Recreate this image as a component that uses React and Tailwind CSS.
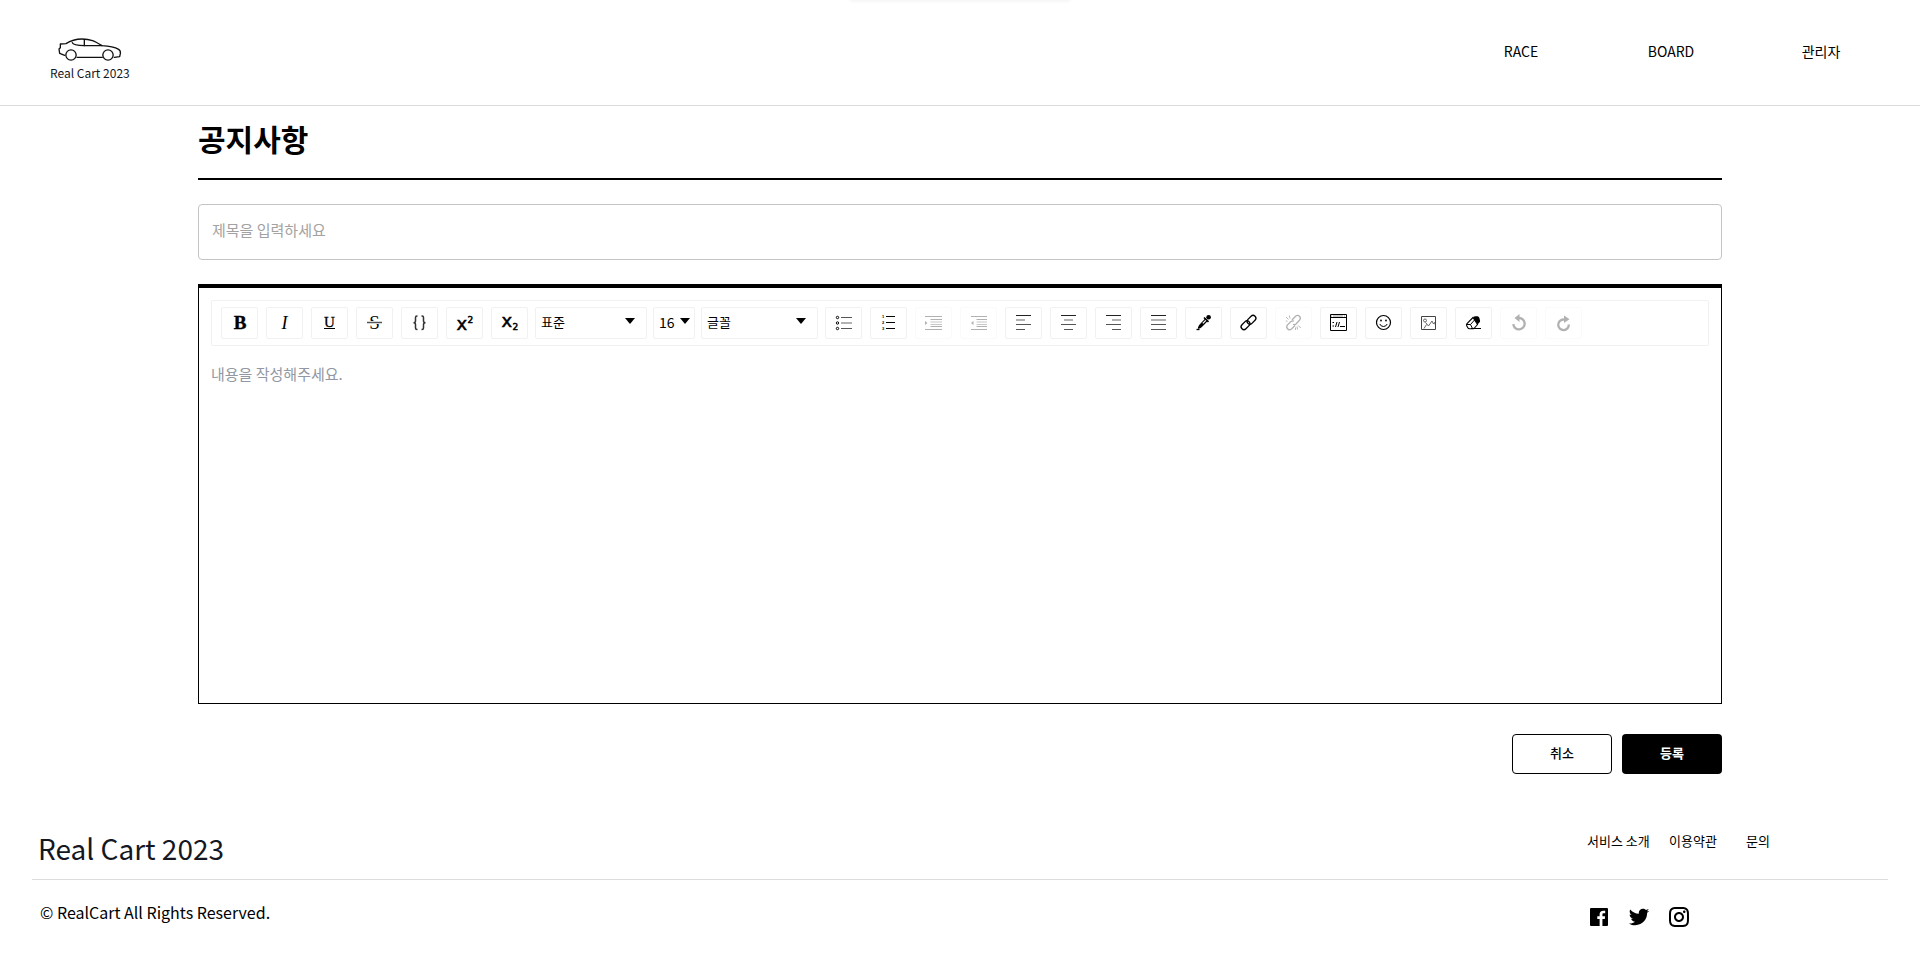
import { useState } from 'react'
import { BiLogoFacebookSquare } from 'react-icons/bi'
import { RiTwitterFill, RiInstagramLine } from 'react-icons/ri'

const NAV_LINKS = ['RACE', 'BOARD', '관리자']

function CarLogo() {
  return (
    <svg
      className="w-16 h-6"
      viewBox="0 0 192 72"
      fill="none"
      stroke="#111"
      strokeWidth="4"
      strokeLinecap="round"
      strokeLinejoin="round"
    >
      <path d="M20 55l-15-6-2-13 4-4V21l17-1c12-8 28-14 48-14 26 0 38 6 60 20 22 1 38 4 50 11 5 3 6 7 5 13l-2 9-16 2" />
      <path d="M57 61h76" />
      <path d="M43 17c2 6 12 8 36 9l53 0" />
      <path d="M79 7v19" />
      <circle cx="39" cy="54" r="15.5" />
      <circle cx="150" cy="54" r="15.5" />
    </svg>
  )
}

function Header() {
  return (
    <header className="flex items-center justify-between border-b border-[#dcdcdc] h-[106px] pl-[50px] pr-6">
      <a href="#" className="flex flex-col items-center pt-3">
        <CarLogo />
        <span className="mt-1 text-xs text-[#14171f] leading-4">Real Cart 2023</span>
      </a>
      <nav className="flex pb-1">
        {NAV_LINKS.map((label) => (
          <a key={label} href="#" className="w-[150px] text-center text-sm leading-5">
            {label}
          </a>
        ))}
      </nav>
    </header>
  )
}

// Every glyph fills the 25x20 content box of its button
const ICONS = {
  bold: (
    <text x="13" y="16" fontSize="19" fontWeight="700" textAnchor="middle" stroke="currentColor" strokeWidth="0.4">B</text>
  ),
  italic: (
    <text x="12.5" y="16" fontSize="18" fontStyle="italic" textAnchor="middle">I</text>
  ),
  underline: (
    <>
      <text x="12.5" y="14" fontSize="15" textAnchor="middle" stroke="currentColor" strokeWidth="0.3">U</text>
      <path d="M7 15.5h11" stroke="currentColor" />
    </>
  ),
  strike: (
    <>
      <text x="12.5" y="16" fontSize="19" textAnchor="middle">S</text>
      <path d="M5 9.5h15" stroke="#fff" strokeWidth="3" />
      <path d="M5 9.500h15" stroke="#555" strokeWidth="1.500" />
    </>
  ),
  code: (
    <g fill="none" stroke="#333" strokeWidth="1.500">
      <path d="M10.500 3H10Q8.500 3 8.500 4.500V8Q8.500 9.700 6.500 9.700Q8.500 9.700 8.500 11.400V15Q8.500 16.500 10 16.500h.5" />
      <path d="M14.500 3h.5Q16.500 3 16.500 4.500V8Q16.500 9.700 18.500 9.700Q16.500 9.700 16.500 11.400V15Q16.500 16.500 15 16.500h-.5" />
    </g>
  ),
  superscript: (
    <g fontFamily="DejaVu Sans" stroke="currentColor" strokeWidth="0.5">
      <text x="4.5" y="17" fontSize="18">x</text>
      <text x="15.5" y="10" fontSize="9">2</text>
    </g>
  ),
  subscript: (
    <g fontFamily="DejaVu Sans" stroke="currentColor" strokeWidth="0.5">
      <text x="4.5" y="14" fontSize="18">x</text>
      <text x="15.5" y="17" fontSize="9">2</text>
    </g>
  ),
  unordered: (
    <>
      <g fill="none" stroke="currentColor" strokeWidth="1">
        <circle cx="6.5" cy="4.5" r="1.2" />
        <circle cx="6.5" cy="10" r="1.2" />
        <circle cx="6.5" cy="15.5" r="1.2" />
      </g>
      <path d="M10 4.5h11M10 15.5h11" stroke="#555" />
      <path d="M10 10h11" stroke="#999" strokeWidth="1.5" />
    </>
  ),
  ordered: (
    <>
      <path d="M10 3.5h9M10 9.5h9M10 15.5h9" stroke="currentColor" strokeWidth="1.2" />
      <g fontFamily="Liberation Sans" fontSize="4" fontWeight="700">
        <text x="6" y="5">1</text>
        <text x="6" y="11">2</text>
        <text x="6" y="17">3</text>
      </g>
    </>
  ),
  indent: (
    <>
      <path d="M4 3.5h17M4 16.5h17M9.5 6.5h11.5M9.5 13.5h11.5" stroke="currentColor" />
      <path d="M9.5 9h11.5M9.5 11.5h11.5" stroke="currentColor" strokeOpacity="0.7" />
      <path d="M4 8l2.5 2L4 12z" />
    </>
  ),
  outdent: (
    <>
      <path d="M5 3.5h16M5 16.5h16M10.5 6.5h10.5M10.5 13.5h10.5" stroke="currentColor" />
      <path d="M10.5 9h10.5M10.5 11.5h10.5" stroke="currentColor" strokeOpacity="0.7" />
      <path d="M7.5 8L5 10l2.5 2z" />
    </>
  ),
  left: (
    <>
      <path d="M5 2.5h15" stroke="#222" />
      <path d="M5 7h9" stroke="#999" strokeWidth="1.5" />
      <path d="M5 11.5h15M5 16.5h9" stroke="#555" />
    </>
  ),
  center: (
    <>
      <path d="M5 2.5h15" stroke="#222" />
      <path d="M8 7h9" stroke="#999" strokeWidth="1.5" />
      <path d="M5 11.5h15M8 16.5h9" stroke="#555" />
    </>
  ),
  right: (
    <>
      <path d="M5 2.5h15" stroke="#222" />
      <path d="M11 7h9" stroke="#999" strokeWidth="1.5" />
      <path d="M5 11.5h15M11 16.5h9" stroke="#555" />
    </>
  ),
  justify: (
    <>
      <path d="M5 2.5h15" stroke="#222" />
      <path d="M5 7h15" stroke="#999" strokeWidth="1.5" />
      <path d="M5 11.5h15M5 16.5h15" stroke="#555" />
    </>
  ),
  color: (
    <>
      <circle cx="17.600" cy="4.200" r="2.300" />
      <path d="M13 4.500l4.500 4.300" stroke="currentColor" strokeWidth="1.600" />
      <path d="M14 6.500l1.800 1.700-5.300 5.300q-1.500 1.300-3 1.600.2-1.700 1.500-3.200z" stroke="currentColor" strokeWidth="1.100" />
      <path d="M14.800 7.300L11.800 10.300" stroke="#fff" strokeWidth="1.200" />
      <path d="M5.500 16.500h3" stroke="currentColor" strokeWidth="1.300" />
    </>
  ),
  link: (
    <g fill="none" stroke="currentColor" strokeWidth="1.300">
      <rect x="10.500" y="4" width="10" height="5.600" rx="2.800" transform="rotate(-45 15.500 6.800)" />
      <rect x="4.500" y="9.400" width="10" height="5.600" rx="2.800" transform="rotate(-45 9.500 12.200)" />
    </g>
  ),
  unlink: (
    <g fill="none" stroke="currentColor" strokeWidth="1.300">
      <path d="M11 7l3.500-3.700q2.200-1.800 4-.1 1.800 1.900 0 4L15 11q-1.500 1.200-3 .3" />
      <path d="M14 12.500L10.500 16q-2.200 1.600-4-.2-1.700-1.900 0-3.900L10 8.500q1.500-1.200 3-.3" />
      <path d="M9 5.500L8.300 2.500M7.500 6.500L5 4M6.500 8.200L4.800 8M16 13.500l.5 3M17.300 12.500l2.500 2.500M14.500 14.500v2.500" strokeWidth="0.900" />
    </g>
  ),
  embedded: (
    <>
      <path d="M4.500 1.500h16v16h-16zM4.500 4.500h16" fill="none" stroke="currentColor" />
      <path d="M5 3h15" stroke="#999" strokeDasharray="1 1 10 1" />
      <path d="M9.500 14l1.500-5M12 14l1.500-5M14 13.500h5" fill="none" stroke="currentColor" />
      <path d="M6.500 9.500h1.500M6.500 13h1.500" stroke="currentColor" />
    </>
  ),
  emoji: (
    <>
      <circle cx="12.500" cy="9.500" r="7" fill="none" stroke="currentColor" strokeWidth="1.200" />
      <circle cx="10" cy="7.500" r="0.900" />
      <circle cx="15" cy="7.500" r="0.900" />
      <path d="M8.800 11q1 2.500 3.700 2.500T16.200 11" fill="none" stroke="currentColor" />
    </>
  ),
  image: (
    <g fill="none" stroke="#444" strokeWidth="1">
      <path d="M5.500 3.500h14v13h-14z" />
      <circle cx="9" cy="7.500" r="1.500" strokeWidth="0.800" />
      <path d="M8 15.500l2.500-4M9.500 9.500l3 3.500 3.500-5 1.500 3 1-1.500 1 2.500" strokeWidth="0.800" />
    </g>
  ),
  eraser: (
    <>
      <path d="M12 4.500Q13 3.300 14.500 3.300h2q1.200.2 1.800 1.500l.8 3q.1 1-.7 1.800l-1.900 1.900z" />
      <path d="M12 4.500l4.500 7-3 3.500q-.8.800-2 .8H8.500q-1.200 0-1.700-1L5.600 12.500q-.3-1 .4-1.800z" fill="#fff" stroke="currentColor" strokeWidth="1.100" />
      <path d="M6 11.500h3.500l2 4M9.500 11.500l4.500-5" fill="none" stroke="currentColor" />
      <path d="M10 15.500h10" stroke="currentColor" />
    </>
  ),
  undo: (
    <>
      <path d="M7.300 11.200a5.700 5.700 0 1 0 5.700-6.200" fill="none" stroke="currentColor" strokeWidth="2.300" />
      <path d="M13.500 1v8L8.500 5z" />
    </>
  ),
  redo: (
    <>
      <path d="M17.800 11.500a5.300 5.300 0 1 1-5.300-5h1.500" fill="none" stroke="currentColor" strokeWidth="2.300" />
      <path d="M13 2.500v7.500l5.500-3.700z" />
    </>
  ),
}

function ToolButton({ name, disabled }) {
  return (
    <button
      type="button"
      aria-label={name}
      disabled={disabled}
      className="mx-1 p-[5px] border border-[#f1f1f1] rounded-xs bg-white disabled:opacity-30 cursor-pointer"
    >
      <svg width="25" height="20" viewBox="0 0 25 20" fill="currentColor" fontFamily="Liberation Serif">
        {ICONS[name]}
      </svg>
    </button>
  )
}

function ToolSelect({ label, value, width, arrow, size }) {
  return (
    <div className={`relative mx-[3px] ${width}`}>
      <select
        aria-label={label}
        className={`appearance-none w-full h-8 pl-[5px] pb-[2px] border border-[#f1f1f1] rounded-xs bg-white ${size}`}
      >
        <option>{value}</option>
      </select>
      <svg
        className={`absolute top-[11px] pointer-events-none ${arrow}`}
        width="10"
        height="6"
        viewBox="0 0 10 6"
      >
        <path d="M0 0h10L5 6z" />
      </svg>
    </div>
  )
}

function Toolbar() {
  return (
    <div className="flex flex-wrap items-center px-[5px] py-[6px] border border-[#f1f1f1] rounded-xs">
      <ToolButton name="bold" />
      <ToolButton name="italic" />
      <ToolButton name="underline" />
      <ToolButton name="strike" />
      <ToolButton name="code" />
      <ToolButton name="superscript" />
      <ToolButton name="subscript" />
      <ToolSelect label="Block type" value="표준" width="w-28" arrow="right-3" size="text-[13px]" />
      <ToolSelect label="Font size" value="16" width="w-[42px]" arrow="right-[5px]" size="text-sm" />
      <ToolSelect label="Font" value="글꼴" width="w-[117px]" arrow="right-3" size="text-[13px]" />
      <ToolButton name="unordered" />
      <ToolButton name="ordered" />
      <ToolButton name="indent" disabled />
      <ToolButton name="outdent" disabled />
      <ToolButton name="left" />
      <ToolButton name="center" />
      <ToolButton name="right" />
      <ToolButton name="justify" />
      <ToolButton name="color" />
      <ToolButton name="link" />
      <ToolButton name="unlink" disabled />
      <ToolButton name="embedded" />
      <ToolButton name="emoji" />
      <ToolButton name="image" />
      <ToolButton name="eraser" />
      <ToolButton name="undo" disabled />
      <ToolButton name="redo" disabled />
    </div>
  )
}

function Footer() {
  return (
    <footer className="mx-8 mt-14">
      <div className="flex items-start justify-between pl-[6px] pb-[13px] border-b border-[#dcdcdc]">
        <span className="text-[28px] leading-9 text-[#14171f]">Real Cart 2023</span>
        <div className="flex w-[301px] text-[13px] leading-[22px]">
          <a href="#" className="w-[82px]">서비스 소개</a>
          <a href="#" className="w-[77px]">이용약관</a>
          <a href="#">문의</a>
        </div>
      </div>
      <div className="flex items-start justify-between pl-2 pt-5">
        <p className="text-base leading-6">© RealCart All Rights Reserved.</p>
        <div className="flex gap-4 w-[301px] mt-[5px]">
          <a href="#" aria-label="Facebook"><BiLogoFacebookSquare className="w-6 h-6" /></a>
          <a href="#" aria-label="Twitter"><RiTwitterFill className="w-6 h-6" /></a>
          <a href="#" aria-label="Instagram"><RiInstagramLine className="w-6 h-6" /></a>
        </div>
      </div>
    </footer>
  )
}

export default function App() {
  const [title, setTitle] = useState('')
  const [content, setContent] = useState('')

  return (
    <div className="relative overflow-hidden min-h-screen bg-white text-black font-['Noto_Sans_CJK_KR',sans-serif]">
      <div className="absolute -top-4 left-1/2 -translate-x-1/2 w-[220px] h-4 shadow-[0_1px_4px_rgba(0,0,0,0.06)]" />

      <Header />

      <main className="px-[198px]">
        <h1 className="pt-3 pb-5 border-b-2 border-black text-[30px] leading-10 font-bold">공지사항</h1>

        <form onSubmit={(e) => e.preventDefault()}>
          <input
            type="text"
            aria-label="제목"
            value={title}
            onChange={(e) => setTitle(e.target.value)}
            placeholder="제목을 입력하세요"
            className="block w-full h-14 mt-6 px-[13px] pb-[6px] border border-[#c4c4c4] rounded text-[15px] leading-6 placeholder:text-[#a2a2a2]"
          />

          <div className="flex flex-col h-[420px] mt-6 px-3 pt-3 border border-t-4 border-black">
            <Toolbar />
            <textarea
              aria-label="내용"
              value={content}
              onChange={(e) => setContent(e.target.value)}
              placeholder="내용을 작성해주세요."
              className="flex-1 mt-4 resize-none outline-none text-[15px] leading-6 placeholder:text-[#9197a3]"
            />
          </div>

          <div className="flex justify-end gap-[10px] mt-[30px] text-[13px]">
            <button type="button" className="w-[100px] h-10 pb-[2px] border border-black rounded font-medium cursor-pointer">
              취소
            </button>
            <button type="submit" className="w-[100px] h-10 pb-[2px] rounded bg-black text-white font-bold cursor-pointer">
              등록
            </button>
          </div>
        </form>
      </main>

      <Footer />
    </div>
  )
}
